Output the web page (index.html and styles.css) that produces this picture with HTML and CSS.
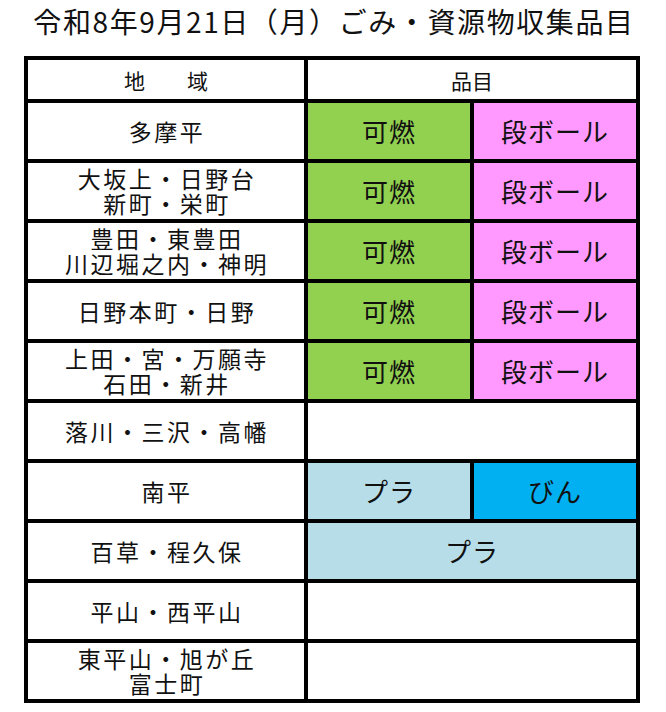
FILE: index.html
```html
<!DOCTYPE html>
<html lang="ja">
<head>
<meta charset="utf-8">
<link rel="stylesheet" href="styles.css">
</head>
<body>
<h1 class="title">令和8年9月21日（月）ごみ・資源物収集品目</h1>
<div class="grid">
  <div class="cell head">地　　域</div>
  <div class="cell head span">品目</div>

  <div class="cell area">多摩平</div>
  <div class="cell item green">可燃</div>
  <div class="cell item pink">段ボール</div>

  <div class="cell area"><span class="line">大坂上・日野台</span><span class="line">新町・栄町</span></div>
  <div class="cell item green">可燃</div>
  <div class="cell item pink">段ボール</div>

  <div class="cell area"><span class="line">豊田・東豊田</span><span class="line">川辺堀之内・神明</span></div>
  <div class="cell item green">可燃</div>
  <div class="cell item pink">段ボール</div>

  <div class="cell area">日野本町・日野</div>
  <div class="cell item green">可燃</div>
  <div class="cell item pink">段ボール</div>

  <div class="cell area"><span class="line">上田・宮・万願寺</span><span class="line">石田・新井</span></div>
  <div class="cell item green">可燃</div>
  <div class="cell item pink">段ボール</div>

  <div class="cell area">落川・三沢・高幡</div>
  <div class="cell item span"></div>

  <div class="cell area">南平</div>
  <div class="cell item lblue">プラ</div>
  <div class="cell item blue">びん</div>

  <div class="cell area">百草・程久保</div>
  <div class="cell item lblue span">プラ</div>

  <div class="cell area">平山・西平山</div>
  <div class="cell item span"></div>

  <div class="cell area"><span class="line">東平山・旭が丘</span><span class="line">富士町</span></div>
  <div class="cell item span"></div>
</div>
</body>
</html>
```

FILE: styles.css
```css
html, body {
  margin: 0;
  padding: 0;
  background: #ffffff;
}
body {
  width: 666px;
  font-family: "Noto Sans CJK JP", "Noto Sans", sans-serif;
  color: #111;
}
.title {
  margin: 0;
  height: 44px;
  line-height: 42px;
  font-size: 28px;
  font-weight: 400;
  text-align: center;
  letter-spacing: 1.6px;
  padding-left: 2px;
}
.grid {
  margin: 12px 0 0 24px;
  width: 608px;
  display: grid;
  grid-template-columns: 276px 162px 162px;
  grid-template-rows: 39px repeat(10, 56px);
  gap: 4px;
  padding: 4px;
  background: #000;
}
.cell {
  background: #fff;
  display: flex;
  flex-direction: column;
  align-items: center;
  justify-content: center;
  text-align: center;
}
.span {
  grid-column: span 2;
}
.head {
  font-size: 21px;
  line-height: 24px;
}
.area {
  font-size: 23px;
  line-height: 25px;
  letter-spacing: 2.5px;
  padding-left: 2px;
}
.line {
  display: block;
  height: 25px;
  overflow: visible;
}
.item {
  font-size: 26px;
  line-height: 30px;
  letter-spacing: 1px;
}
.green { background: #92d050; }
.pink { background: #ff99ff; }
.lblue { background: #b7dee8; }
.blue { background: #00b0f0; }
```
